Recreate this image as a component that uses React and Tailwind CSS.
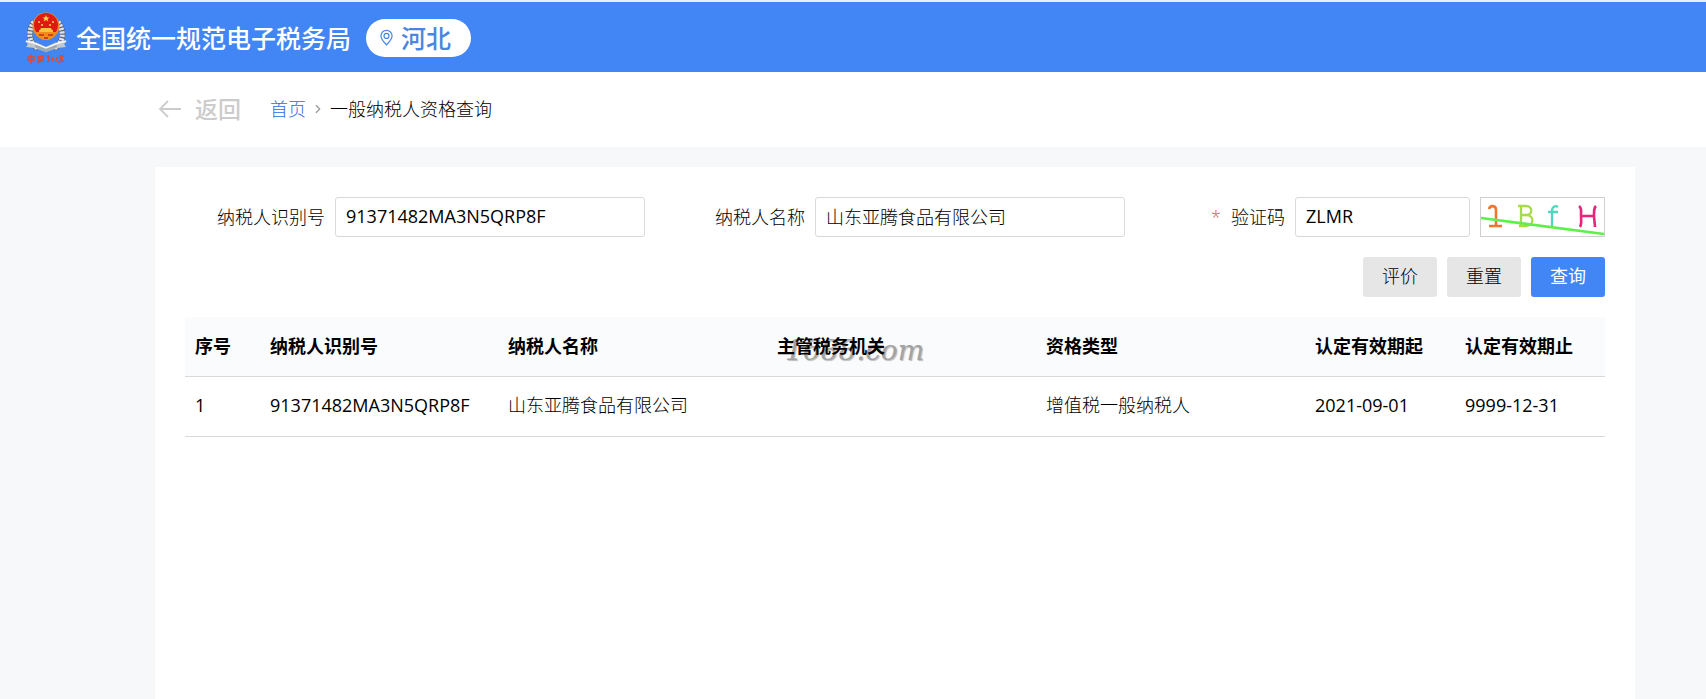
import { ChevronRight } from 'lucide-react'

const columns = [
  { title: '序号', key: 'index', width: 'w-[75px]', weight: 'font-normal' },
  { title: '纳税人识别号', key: 'taxId', width: 'w-[238px]', weight: 'font-normal' },
  { title: '纳税人名称', key: 'name' },
  { title: '主管税务机关', key: 'authority', mark: '1688.com' },
  { title: '资格类型', key: 'type' },
  { title: '认定有效期起', key: 'from', width: 'w-[150px]', weight: 'font-normal' },
  { title: '认定有效期止', key: 'to', width: 'w-[150px]', weight: 'font-normal' },
]

const rows = [
  {
    index: '1',
    taxId: '91371482MA3N5QRP8F',
    name: '山东亚腾食品有限公司',
    authority: '',
    type: '增值税一般纳税人',
    from: '2021-09-01',
    to: '9999-12-31',
  },
]

function Emblem() {
  return (
    <svg width="42" height="54" viewBox="0 0 42 54" fill="none" aria-hidden="true">
      {/* wreath */}
      <path
        d="M9 11C2 21 4 33 13 37M33 11c7 10 5 22-4 26"
        stroke="#55657c"
        strokeWidth="6"
      />
      <path
        d="M9 11C2 21 4 33 13 37M33 11c7 10 5 22-4 26"
        stroke="#dfe2e6"
        strokeWidth="5"
        strokeDasharray="2.200 1.200"
      />
      {/* ribbon */}
      <path d="M0 30l8 1 13 5 13-5 8-1-3 3 2 3-9 1-11 4-11-4-9-1 2-3z" fill="#c3c8ce" />
      <path d="M11 31l10 5 10-5 1 5-11 5-11-5z" fill="#a2a8af" />
      <path d="M1 30l8 2 12 5 12-5 8-2" stroke="#fbfbfb" strokeWidth="1.500" />
      {/* shield */}
      <circle cx="21" cy="15" r="13.500" fill="#f08a24" />
      <circle cx="21" cy="14" r="12" fill="#df1a12" />
      <path d="M11 21h20l-2 5-5 3h-6l-5-3z" fill="#f28a1c" />
      <path d="M14 19h14v2H14zM16 17h10l1 2H15z" fill="#f8c43a" />
      <path d="M14 24h5M23 24h5M19 27h4" stroke="#c4300f" strokeWidth="1.500" />
      <path d="M21 4l1 2.500h2.500l-2 1.500.8 2.500L21 9l-2.300 1.500.8-2.500-2-1.500H20z" fill="#ffd84a" />
      <g fill="#ffd84a">
        <circle cx="14" cy="11" r="1" />
        <circle cx="17" cy="14" r="1" />
        <circle cx="25" cy="14" r="1" />
        <circle cx="28" cy="11" r="1" />
      </g>
      {/* brush lettering under the shield */}
      <g stroke="#e8442c" strokeWidth="1.300">
        <path d="M3 46h6v3H3zM6 43v10" />
        <path d="M13 46l5-1v5l-5 1zM15 47v3M14 48h3" />
        <path d="M22 46h3M23 44l1 6-2 1M27 46l1 4" />
        <path d="M32 46l-1 4M34 45h5M34 48h4M36 45v5M33 51l6-1" />
      </g>
    </svg>
  )
}

function PinIcon() {
  return (
    <svg width="13" height="18" viewBox="0 0 14 18" fill="none" stroke="#4a86e0" strokeWidth="1.300" aria-hidden="true">
      <path d="M7 16.500C4.500 13.500 1 10.200 1 6.800a6 6 0 0 1 12 0c0 3.400-3.500 6.700-6 9.700z" />
      <circle cx="7" cy="6.800" r="2.700" />
    </svg>
  )
}

function BackArrow() {
  return (
    <svg width="24" height="20" viewBox="0 0 24 20" fill="none" stroke="currentColor" strokeWidth="1.800" aria-hidden="true">
      <path d="M23 10H2M10 2L2 10l8 8" />
    </svg>
  )
}

function Captcha() {
  return (
    <svg width="123" height="38" viewBox="0 0 123 38" fill="none" strokeWidth="2.300" aria-hidden="true">
      <path d="M8 11c1-4 7-4 7 1v16M8 28h13" stroke="#f0762c" strokeWidth="2.600" />
      <path d="M37 8h8c7 0 7 9 0 9h-5M45 17c9 0 8 11 0 11h-7M40 8v20" stroke="#a6dc4a" />
      <path d="M77 9c-3-2-6 0-6 4v16M67 14h10" stroke="#4fd6bd" />
      <path d="M98 8c3 2 2 4 2 9s1 9-1 12M115 8c-2 2-2 4-2 9s1 9 1 12M100 18h14" stroke="#e6267a" strokeWidth="2.600" />
      <path d="M0 20l123 16" stroke="#5bf04a" strokeWidth="2.600" />
    </svg>
  )
}

function Field({ id, label, value, weight, required, children }) {
  return (
    <div className="flex items-center gap-[10px]">
      <label htmlFor={id} className="w-[140px] shrink-0 text-right">
        {required && <span className="mr-[10px] text-[#d9534f]">*</span>}
        {label}
      </label>
      <input
        id={id}
        type="text"
        defaultValue={value}
        className={`h-10 min-w-0 flex-1 rounded-[3px] border border-[#d9d9d9] bg-white px-[10px] pb-[3px] outline-none focus:border-[#4285f4] ${weight || ''}`}
      />
      {children}
    </div>
  )
}

export default function App() {
  return (
    <div className="flex min-h-screen flex-col border-t-2 border-[#e8eefa] bg-[#f6f8fa] font-['Open_Sans','Noto_Sans_CJK_SC',sans-serif] text-[18px] leading-[26px] font-light text-black">
      <header className="flex h-[70px] items-center bg-[#4285f4] pt-[2px] pl-[25px]">
        <Emblem />
        <h1 className="ml-[9px] text-[25px] font-medium text-white">全国统一规范电子税务局</h1>
        <button
          type="button"
          className="ml-[15px] flex h-[38px] items-center gap-2 rounded-full bg-white px-[14px] text-[25px] font-medium text-[#4a86e0]"
        >
          <PinIcon />
          <span className="pr-[6px]">河北</span>
        </button>
      </header>

      <nav className="flex h-[75px] items-center bg-white pb-[2px] pl-[158px]">
        <a href="#back" className="flex items-center gap-[13px] text-[23px] font-medium text-[#ccc]">
          <BackArrow />
          返回
        </a>
        <a href="#home" className="ml-[29px] text-[#2f6be0]">
          首页
        </a>
        <ChevronRight size={14} strokeWidth={2} className="mx-[5px] text-[#999]" />
        <span>一般纳税人资格查询</span>
      </nav>

      <main className="mt-5 mr-[71px] ml-[155px] flex-1 bg-white p-[30px]">
        <form onSubmit={(e) => e.preventDefault()}>
          <div className="grid grid-cols-3 gap-5">
            <Field id="taxId" label="纳税人识别号" value="91371482MA3N5QRP8F" weight="font-normal" />
            <Field id="name" label="纳税人名称" value="山东亚腾食品有限公司" />
            <Field id="code" label="验证码" value="ZLMR" weight="font-normal" required>
              <button type="button" aria-label="刷新验证码" className="h-10 w-[125px] shrink-0 border border-[#d0d0d0]">
                <Captcha />
              </button>
            </Field>
          </div>
          <div className="mt-5 flex justify-end gap-[10px]">
            <button type="button" className="h-10 w-[74px] rounded-[3px] bg-[#e6e6e6] pb-[2px]">
              评价
            </button>
            <button type="reset" className="h-10 w-[74px] rounded-[3px] bg-[#e6e6e6] pb-[2px]">
              重置
            </button>
            <button type="submit" className="h-10 w-[74px] rounded-[3px] bg-[#4285f4] pb-[2px] font-normal text-white">
              查询
            </button>
          </div>
        </form>

        <table className="mt-5 w-full table-fixed border-collapse text-left">
          <thead>
            <tr className="h-[59px] border-b border-[#d9d9d9] bg-[#fafbfd]">
              {columns.map((col) => (
                <th key={col.key} className={`px-[10px] font-bold ${col.width || ''}`}>
                  {col.mark ? (
                    <span className="relative">
                      <span className="absolute top-[4px] left-[8px] font-['DejaVu_Serif',serif] text-[28px] font-normal text-[#a3a3a3] italic [text-shadow:1px_1px_1px_#bbb]">
                        {col.mark}
                      </span>
                      <span className="relative">{col.title}</span>
                    </span>
                  ) : (
                    col.title
                  )}
                </th>
              ))}
            </tr>
          </thead>
          <tbody>
            {rows.map((row) => (
              <tr key={row.taxId} className="h-[60px] border-b border-[#d9d9d9]">
                {columns.map((col) => (
                  <td key={col.key} className={`px-[10px] pb-[2px] whitespace-nowrap ${col.weight || ''}`}>
                    {row[col.key]}
                  </td>
                ))}
              </tr>
            ))}
          </tbody>
        </table>
      </main>
    </div>
  )
}
